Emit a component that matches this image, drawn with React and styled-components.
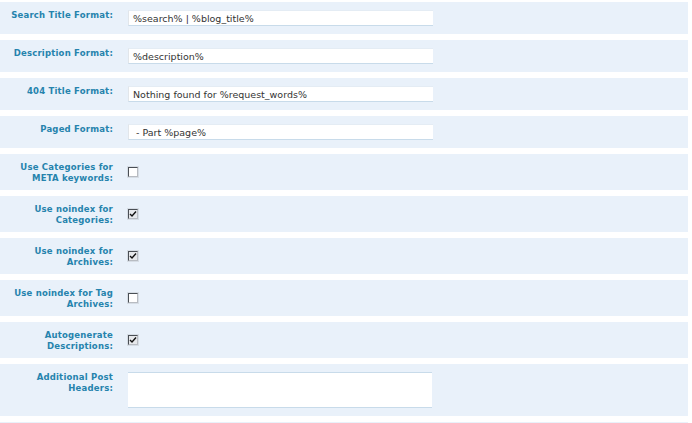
import React from 'react'
import styled, { createGlobalStyle } from 'styled-components'

const GlobalStyle = createGlobalStyle`
  body {
    margin: 0;
    background: #fff;
    font-family: 'DejaVu Sans', Verdana, sans-serif;
  }
`

const Table = styled.div`
  width: 688px;
  padding-top: 2px;
  display: flex;
  flex-direction: column;
  gap: 6px;
`

const Row = styled.div`
  display: grid;
  grid-template-columns: 113px 1fr;
  column-gap: 15px;
  padding: 6px 0;
  min-height: ${props => props.minHeight || 0}px;
  background: #e9f1fa;
`

const Label = styled.div`
  text-align: right;
  font-size: 8.5px;
  font-weight: bold;
  line-height: 11px;
  padding-top: 2px;
  color: #2583ad;
  letter-spacing: 0.2px;
`

const Control = styled.div`
  display: flex;
  align-items: center;
`

const TextInput = styled.div`
  width: 300px;
  height: 14px;
  margin: 2px 0;
  padding-left: 4px;
  background: #fff;
  border-top: 1px solid #e4ecf4;
  border-left: 1px solid #e2e6ea;
  border-bottom: 1px solid #c8dbea;
  font-size: 9.5px;
  line-height: 15px;
  color: #333;
  white-space: pre;
`

const TextArea = styled.div`
  width: 304px;
  height: 34px;
  margin: 2px 0;
  background: #fff;
  border-top: 1px solid #c8dbea;
  border-bottom: 1px solid #c8dbea;
`

const Box = styled.span`
  position: relative;
  width: 8px;
  height: 8px;
  border-top: 1px solid #4a4f55;
  border-left: 1px solid #4a4f55;
  border-right: 1px solid #b8bcc2;
  border-bottom: 1px solid #b8bcc2;
  box-shadow: 0 0 0 1px #d6dde5;
  background: ${props => (props.checked ? '#e6e8eb' : '#fff')};
`

const Check = styled.svg`
  position: absolute;
  left: 0;
  top: 0;
`

const CheckBox = ({ checked }) => (
  <Box checked={checked}>
    {checked && (
      <Check width="8" height="8" viewBox="0 0 8 8">
        <path d="M1 4 L3 6 L7 1.5" fill="none" stroke="#111" strokeWidth="1.4" />
      </Check>
    )}
  </Box>
)

const fields = [
  { label: 'Search Title Format:', value: '%search% | %blog_title%' },
  { label: 'Description Format:', value: '%description%' },
  { label: '404 Title Format:', value: 'Nothing found for %request_words%' },
  { label: 'Paged Format:', value: ' - Part %page%' },
  { label: ['Use Categories for', 'META keywords:'], check: false },
  { label: ['Use noindex for', 'Categories:'], check: true },
  { label: ['Use noindex for', 'Archives:'], check: true },
  { label: ['Use noindex for Tag', 'Archives:'], check: false },
  { label: ['Autogenerate', 'Descriptions:'], check: true },
  { label: ['Additional Post', 'Headers:'], area: true },
]

const App = () => (
  <>
    <GlobalStyle />
    <Table>
      {fields.map((f, i) => (
        <Row key={i}>
          <Label>
            {Array.isArray(f.label)
              ? f.label.map((l, j) => <div key={j}>{l}</div>)
              : f.label}
          </Label>
          <Control>
            {f.value !== undefined && <TextInput>{f.value}</TextInput>}
            {f.check !== undefined && <CheckBox checked={f.check} />}
            {f.area && <TextArea />}
          </Control>
        </Row>
      ))}
      <Row minHeight={20} />
    </Table>
  </>
)

export default App
